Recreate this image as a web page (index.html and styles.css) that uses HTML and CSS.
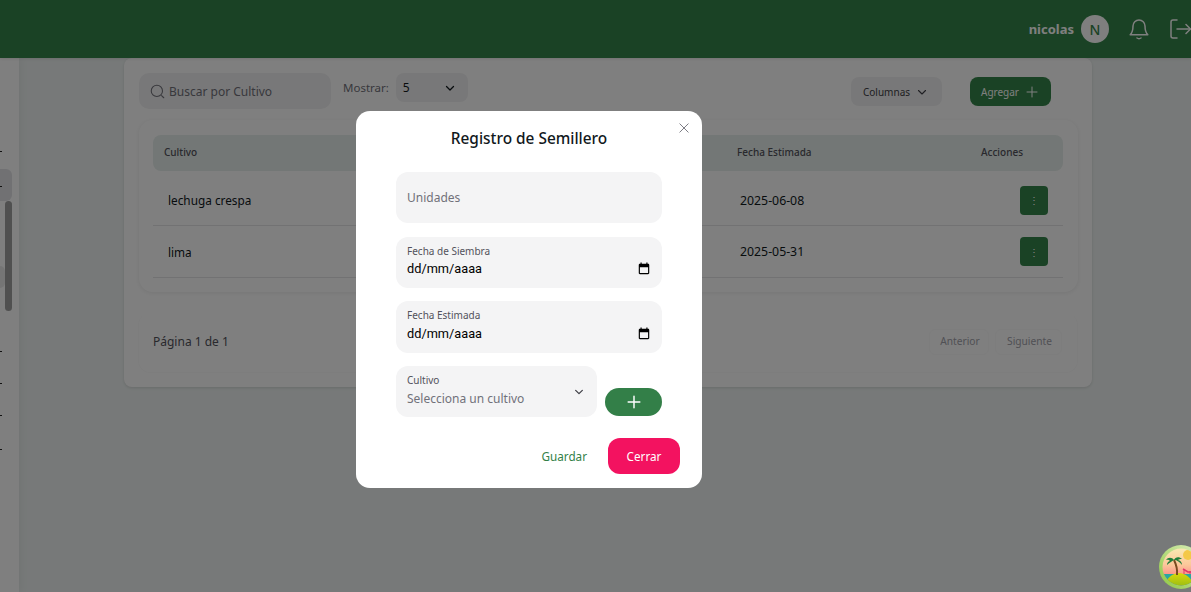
FILE: index.html
```html
<!DOCTYPE html>
<html lang="es">
<head>
    <meta charset="UTF-8">
    <meta name="viewport" content="width=device-width, initial-scale=1.0">
    <title>Registro de Semillero</title>
    <link rel="stylesheet" href="styles.css">
</head>
<body>
    <header class="topbar">
        <span class="user-name">nicolas</span>
        <span class="avatar">N</span>
        <svg class="bell" width="24" height="24" viewBox="0 0 24 24" fill="none" stroke="currentColor" stroke-width="1.5" stroke-linecap="round" stroke-linejoin="round"><path d="M12 3a6 6 0 0 0-6 6c0 4.500-1 7-2.800 8.800h17.600C19 16 18 13.500 18 9a6 6 0 0 0-6-6z"/><path d="M10 21c1.200.8 2.800.8 4 0"/></svg>
        <svg class="logout" width="24" height="24" viewBox="0 0 24 24" fill="none" stroke="currentColor" stroke-width="1.500" stroke-linecap="round" stroke-linejoin="round"><path d="M9 3H5a2 2 0 0 0-2 2v14a2 2 0 0 0 2 2h4"/><path d="M9 12h13"/><path d="M18 7.500l4.500 4.500-4.500 4.500"/></svg>
    </header>

    <div class="layout">
        <aside class="sidebar">
            <span class="side-dot dot-1"></span>
            <span class="side-active"></span>
            <span class="side-dot dot-6"></span>
            <span class="side-thumb"></span>
            <span class="side-hover"></span>
            <span class="side-dot dot-2"></span>
            <span class="side-dot dot-3"></span>
            <span class="side-dot dot-4"></span>
            <span class="side-dot dot-5"></span>
        </aside>

        <main class="card">
            <div class="toolbar">
                <div class="search">
                    <svg width="15" height="15" viewBox="0 0 24 24" fill="none" stroke="currentColor" stroke-width="1.700" stroke-linecap="round"><circle cx="11" cy="11" r="9"/><path d="M22 22l-3.500-3.500"/></svg>
                    <span>Buscar por Cultivo</span>
                </div>
                <span class="show-label">Mostrar:</span>
                <div class="show-select">
                    <span>5</span>
                    <svg width="12" height="12" viewBox="0 0 24 24" fill="none" stroke="currentColor" stroke-width="2.500" stroke-linecap="round" stroke-linejoin="round"><path d="M5 9l7 7 7-7"/></svg>
                </div>
                <button class="btn-columns">Columnas
                    <svg width="12" height="12" viewBox="0 0 24 24" fill="none" stroke="currentColor" stroke-width="2.200" stroke-linecap="round" stroke-linejoin="round"><path d="M5 9l7 7 7-7"/></svg>
                </button>
                <button class="btn-add">Agregar
                    <svg width="12" height="12" viewBox="0 0 24 24" fill="none" stroke="currentColor" stroke-width="2" stroke-linecap="round"><path d="M12 2v20M2 12h20"/></svg>
                </button>
            </div>

            <div class="table-box">
                <div class="row row-head">
                    <span class="cell-name">Cultivo</span>
                    <span class="cell-date">Fecha Estimada</span>
                    <span class="cell-actions">Acciones</span>
                </div>
                <div class="row">
                    <span class="cell-name">lechuga crespa</span>
                    <span class="cell-date">2025-06-08</span>
                    <span class="cell-actions"><button class="btn-more">&#8942;</button></span>
                </div>
                <div class="row row-last">
                    <span class="cell-name">lima</span>
                    <span class="cell-date">2025-05-31</span>
                    <span class="cell-actions"><button class="btn-more">&#8942;</button></span>
                </div>
            </div>

            <div class="pager">
                <span class="page-info">Página 1 de 1</span>
                <div class="page-btns">
                    <button class="btn-page btn-prev">Anterior</button>
                    <button class="btn-page btn-next">Siguiente</button>
                </div>
            </div>
        </main>
    </div>

    <!-- capa oscura + modal -->
    <div class="overlay"></div>

    <svg class="palm-logo" width="44" height="44" viewBox="0 0 44 44">
        <defs>
            <linearGradient id="sky" x1="0" y1="0" x2="0" y2="1">
                <stop offset="0" stop-color="#f8f0b8"/>
                <stop offset=".45" stop-color="#fcc79a"/>
                <stop offset=".7" stop-color="#fb8f8a"/>
            </linearGradient>
            <linearGradient id="ring" x1="0" y1="1" x2="1" y2="0">
                <stop offset="0" stop-color="#8cc63f"/>
                <stop offset="1" stop-color="#dff0c0"/>
            </linearGradient>
            <linearGradient id="hill" x1="0" y1="0" x2="0" y2="1">
                <stop offset="0" stop-color="#d8d80c"/>
                <stop offset="1" stop-color="#8fb814"/>
            </linearGradient>
            <clipPath id="inner"><circle cx="22" cy="22" r="18.500"/></clipPath>
        </defs>
        <circle cx="22" cy="22" r="22" fill="url(#ring)"/>
        <g clip-path="url(#inner)">
            <rect x="0" y="0" width="44" height="44" fill="url(#sky)"/>
            <circle cx="29" cy="10" r="5" fill="#f4c848"/>
            <rect x="0" y="29" width="44" height="15" fill="#2aa7a0"/>
            <path d="M24 24l5 3 4 0" stroke="#e0356a" stroke-width="1.500" fill="none"/>
            <path d="M25 24v5M31 26v3" stroke="#e0356a" stroke-width="1" fill="none"/>
            <path d="M5 44c1-10 8-16 15-16s14 6 16 16z" fill="url(#hill)"/>
            <path d="M18 30c.5-5-.5-10-3-15" stroke="#7a4a20" stroke-width="2" fill="none"/>
            <path d="M15 15c-2-3-6-3-8 0 2-.5 3 0 4 1-2 .5-3 2-3 4 2-2 5-4 7-5zM15 15c1-3 5-4 8-1-2 0-3 0-4 1 2 .5 4 2 4 5-2-3-5-5-8-5z" fill="#1f7d3a"/>
        </g>
    </svg>

    <section class="modal">
        <button class="modal-close" aria-label="Cerrar">
            <svg width="10" height="10" viewBox="0 0 24 24" fill="none" stroke="currentColor" stroke-width="2.200" stroke-linecap="round"><path d="M2 2l20 20M22 2L2 22"/></svg>
        </button>
        <h2 class="modal-title">Registro de Semillero</h2>
        <div class="form">
            <div class="field field-plain">Unidades</div>
            <div class="field">
                <label class="field-label">Fecha de Siembra</label>
                <div class="date-line">
                    <span>dd/mm/aaaa</span>
                    <svg width="14" height="14" viewBox="0 0 24 24" fill="#000"><path d="M19 3h-1V1h-2v2H8V1H6v2H5c-1.100 0-2 .9-2 2v14c0 1.100.9 2 2 2h14c1.100 0 2-.9 2-2V5c0-1.100-.9-2-2-2zm0 16H5V9h14v10z"/></svg>
                </div>
            </div>
            <div class="field field-tall">
                <label class="field-label">Fecha Estimada</label>
                <div class="date-line">
                    <span>dd/mm/aaaa</span>
                    <svg width="14" height="14" viewBox="0 0 24 24" fill="#000"><path d="M19 3h-1V1h-2v2H8V1H6v2H5c-1.100 0-2 .9-2 2v14c0 1.100.9 2 2 2h14c1.100 0 2-.9 2-2V5c0-1.100-.9-2-2-2zm0 16H5V9h14v10z"/></svg>
                </div>
            </div>
            <div class="crop-line">
                <div class="field field-select">
                    <label class="field-label">Cultivo</label>
                    <div class="select-value">Selecciona un cultivo</div>
                    <svg class="select-arrow" width="10" height="10" viewBox="0 0 24 24" fill="none" stroke="currentColor" stroke-width="3" stroke-linecap="round" stroke-linejoin="round"><path d="M4 8l8 8 8-8"/></svg>
                </div>
                <button class="btn-plus">
                    <svg width="14" height="14" viewBox="0 0 24 24" fill="none" stroke="#fff" stroke-width="2.500" stroke-linecap="round"><path d="M12 2v20M2 12h20"/></svg>
                </button>
            </div>
        </div>
        <div class="modal-foot">
            <button class="btn-save">Guardar</button>
            <button class="btn-close">Cerrar</button>
        </div>
    </section>
</body>
</html>
```

FILE: styles.css
```css
*{
 box-sizing: border-box;
}
html, body{
 height: 100%;
}
body{
 margin: 0;
 overflow: hidden;
 background-color: #eef3f2;
 font-family: "Noto Sans", sans-serif;
 color: #11181c;
}
button{
 font-family: inherit;
 border: none;
 cursor: pointer;
}

/* barra superior */
.topbar{
 height: 58px;
 background-color: #35854a;
 box-shadow: 0 1px 3px rgba(0,0,0,.1);
 display: flex;
 align-items: center;
 justify-content: flex-end;
 color: #fff;
 position: relative;
 z-index: 1;
}
.user-name{
 font-size: 13px;
 font-weight: 700;
 margin-right: 7px;
}
.avatar{
 width: 28px;
 height: 28px;
 border-radius: 50%;
 background-color: #fff;
 color: #35854a;
 font-size: 14px;
 font-weight: 500;
 display: flex;
 align-items: center;
 justify-content: center;
 margin-right: 18px;
}
.bell{
 margin-right: 17px;
}
.logout{
 margin-right: -1px;
 flex-shrink: 0;
}

.layout{
 display: flex;
 height: 534px;
}

/* menu lateral (recortado) */
.sidebar{
 width: 19px;
 background-color: #fff;
 box-shadow: 2px 0 8px rgba(0,0,0,.05);
 position: relative;
 overflow: hidden;
 flex-shrink: 0;
}
.side-dot{
 position: absolute;
 left: 0;
 width: 2px;
 height: 1px;
 background-color: #222;
 z-index: 1;
}
.dot-1{ top: 93px; }
.dot-6{ top: 128px; }
.dot-2{ top: 293px; }
.dot-3{ top: 325px; }
.dot-4{ top: 357px; }
.dot-5{ top: 391px; }
.side-active{
 position: absolute;
 left: 0;
 top: 111px;
 width: 12px;
 height: 32px;
 background-color: #e2e3e6;
 border-radius: 0 6px 6px 0;
}
.side-hover{
 position: absolute;
 left: 0;
 top: 208px;
 width: 5px;
 height: 22px;
 background-color: #ebebeb;
 border-radius: 0 6px 6px 0;
}
.side-thumb{
 position: absolute;
 left: 5px;
 top: 143px;
 width: 7px;
 height: 110px;
 background-color: #a0a0a0;
 border-radius: 4px;
}

/* tarjeta principal */
.card{
 width: 968px;
 height: 329px;
 margin-left: 105px;
 background-color: #fff;
 border-radius: 8px;
 box-shadow: 0 1px 3px rgba(0,0,0,.12);
 padding: 15px 14px 14px 15px;
}
.toolbar{
 display: flex;
 align-items: flex-start;
 height: 47px;
}
.search{
 width: 192px;
 height: 36px;
 background-color: #f1f1f2;
 border-radius: 10px;
 display: flex;
 align-items: center;
 gap: 4px;
 padding-left: 11px;
 font-size: 12px;
 color: #71717a;
}
.show-label{
 font-size: 11.500px;
 color: #71717a;
 margin-left: 12px;
 margin-top: 7px;
}
.show-select{
 width: 72px;
 height: 29px;
 margin-left: 7px;
 background-color: #f1f1f2;
 border-radius: 8px;
 display: flex;
 align-items: center;
 justify-content: space-between;
 padding: 0 12px 0 7px;
 font-size: 12px;
}
.btn-columns{
 width: 91px;
 height: 29px;
 margin-top: 4px;
 margin-left: auto;
 padding: 0 2px 0 0;
 background-color: #f1f1f2;
 border-radius: 8px;
 font-size: 10px;
 color: #3f3f46;
 display: flex;
 align-items: center;
 justify-content: center;
 gap: 6px;
}
.btn-add{
 width: 81px;
 height: 29px;
 margin-top: 4px;
 margin-left: 28px;
 margin-right: 27px;
 padding: 0 2px 0 0;
 background-color: #35854a;
 border-radius: 8px;
 font-size: 10px;
 color: #fff;
 display: flex;
 align-items: center;
 justify-content: center;
 gap: 7px;
}

/* tabla */
.table-box{
 height: 172px;
 border-radius: 14px;
 box-shadow: 0 1px 5px rgba(0,0,0,.08);
 padding: 15px 15px 0 14px;
}
.row{
 display: flex;
 align-items: center;
 height: 52px;
 border-bottom: 1px solid #e4e4e7;
 font-size: 11.800px;
}
.row:nth-child(2){
 height: 55px;
 padding-top: 4px;
}
.row-head{
 height: 36px;
 padding: 0 0 2px;
 background-color: #e6efec;
 border-bottom: none;
 border-radius: 8px;
 font-size: 10px;
 font-weight: 500;
 color: #52525b;
}
.cell-name{
 padding-left: 15px;
 width: 587px;
}
.row-head .cell-name{
 padding-left: 11px;
}
.cell-date{
 width: 240px;
 font-size: 12.300px;
}
.row-head .cell-date{
 margin-left: -3px;
 margin-right: 3px;
 font-size: 10px;
}
.cell-actions{
 flex: 1;
 display: flex;
 padding-left: 40px;
}
.row-head .cell-actions{
 padding-left: 1px;
}
.btn-more{
 width: 28px;
 height: 29px;
 background-color: #35854a;
 color: #fff;
 border-radius: 4px;
 font-size: 10px;
 padding: 0;
}

/* paginacion */
.pager{
 height: 60px;
 margin-top: 21px;
 margin-left: -1px;
 border-radius: 12px;
 border: 1px solid #fbfbfb;
 border-top: none;
 display: flex;
 align-items: center;
 justify-content: space-between;
 padding: 0 15px 2px 14px;
 font-size: 12px;
 color: #52525b;
}
.page-btns{
 display: flex;
 gap: 6px;
}
.btn-page{
 height: 26px;
 padding: 0 0 2px 2px;
 background: #fff;
 border: 1px solid #fafafa;
 border-radius: 6px;
 font-size: 10.200px;
 color: #a1a1aa;
}
.btn-prev{
 width: 60px;
}
.btn-next{
 width: 67px;
}

/* capa oscura */
.overlay{
 position: fixed;
 inset: 0;
 background-color: rgba(0,0,0,.5);
 z-index: 2;
}
.palm-logo{
 position: fixed;
 left: 1159px;
 top: 545px;
 z-index: 3;
}

/* modal */
.modal{
 position: fixed;
 left: 356px;
 top: 111px;
 width: 346px;
 height: 377px;
 background-color: #fff;
 border-radius: 14px;
 z-index: 4;
 padding: 19px 22px 14px 40px;
}
.modal-close{
 position: absolute;
 top: 12px;
 right: 13px;
 width: 10px;
 height: 10px;
 padding: 0;
 background: none;
 color: #71717a;
 display: flex;
}
.modal-title{
 margin: 0;
 width: 266px;
 text-align: center;
 font-size: 15.400px;
 font-weight: 500;
 line-height: 18px;
}
.form{
 margin-top: 24px;
 width: 266px;
 display: flex;
 flex-direction: column;
 gap: 14px;
}
.field{
 height: 51px;
 background-color: #f4f4f5;
 border-radius: 12px;
 padding: 7px 11px;
}
.field-tall{
 height: 52px;
 margin-top: -1px;
}
.field-tall .date-line{
 margin-top: 2px;
}
.field-plain{
 font-size: 12px;
 color: #71717a;
 padding-top: 17px;
 padding-left: 11px;
}
.field-label{
 display: block;
 font-size: 10px;
 line-height: 15px;
 color: #52525b;
}
.date-line{
 display: flex;
 align-items: center;
 justify-content: space-between;
 font-family: "Roboto", sans-serif;
 font-size: 12.750px;
 line-height: 18px;
 color: #000;
 margin-top: 1px;
}
.crop-line{
 display: flex;
 align-items: flex-end;
 gap: 8px;
 margin-top: -1px;
}
.field-select{
 width: 201px;
 position: relative;
}
.select-value{
 font-size: 12px;
 line-height: 18px;
 color: #71717a;
 margin-top: 2px;
}
.select-arrow{
 position: absolute;
 right: 13px;
 top: 21px;
 color: #3f3f46;
}
.btn-plus{
 width: 57px;
 height: 28px;
 margin-bottom: 1px;
 border-radius: 14px;
 background-color: #337f48;
 display: flex;
 align-items: center;
 justify-content: center;
 padding: 0;
}
.modal-foot{
 display: flex;
 justify-content: flex-end;
 align-items: center;
 margin-top: 21px;
 gap: 21px;
}
.btn-save{
 background: none;
 padding: 0;
 font-size: 11.700px;
 color: #337f48;
}
.btn-close{
 width: 72px;
 height: 36px;
 background-color: #f31260;
 color: #fff;
 border-radius: 12px;
 font-size: 11.700px;
}
```
